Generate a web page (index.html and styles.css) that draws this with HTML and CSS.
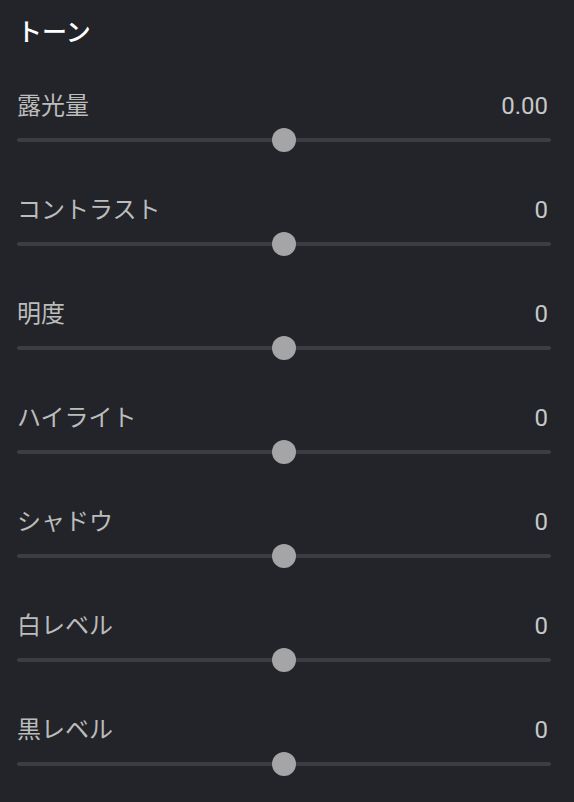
FILE: index.html
```html
<!DOCTYPE html>
<html lang="ja">
<head>
    <meta charset="utf-8" />
    <title>トーン</title>
    <link rel="stylesheet" href="styles.css">
</head>
<body>
    <div class="panel">
        <h2 class="panel-title">トーン</h2>

        <div class="adjust">
            <div class="adjust-head">
                <span class="adjust-label">露光量</span>
                <span class="adjust-value">0.00</span>
            </div>
            <input class="adjust-slider" type="range" min="-5" max="5" step="0.01" value="0" />
        </div>

        <div class="adjust">
            <div class="adjust-head">
                <span class="adjust-label">コントラスト</span>
                <span class="adjust-value">0</span>
            </div>
            <input class="adjust-slider" type="range" min="-100" max="100" value="0" />
        </div>

        <div class="adjust">
            <div class="adjust-head">
                <span class="adjust-label">明度</span>
                <span class="adjust-value">0</span>
            </div>
            <input class="adjust-slider" type="range" min="-100" max="100" value="0" />
        </div>

        <div class="adjust">
            <div class="adjust-head">
                <span class="adjust-label">ハイライト</span>
                <span class="adjust-value">0</span>
            </div>
            <input class="adjust-slider" type="range" min="-100" max="100" value="0" />
        </div>

        <div class="adjust">
            <div class="adjust-head">
                <span class="adjust-label">シャドウ</span>
                <span class="adjust-value">0</span>
            </div>
            <input class="adjust-slider" type="range" min="-100" max="100" value="0" />
        </div>

        <div class="adjust">
            <div class="adjust-head">
                <span class="adjust-label">白レベル</span>
                <span class="adjust-value">0</span>
            </div>
            <input class="adjust-slider" type="range" min="-100" max="100" value="0" />
        </div>

        <div class="adjust">
            <div class="adjust-head">
                <span class="adjust-label">黒レベル</span>
                <span class="adjust-value">0</span>
            </div>
            <input class="adjust-slider" type="range" min="-100" max="100" value="0" />
        </div>
    </div>
</body>
</html>
```

FILE: styles.css
```css
html, body {
    margin: 0;
    background-color: #222429;
}

body {
    font-family: "Noto Sans CJK JP", "Noto Sans", sans-serif;
    color: #bcbcbc;
}

.panel {
    padding: 14px 23px 0 17px;
}

.panel-title {
    margin: 0 0 42px 0;
    font-size: 25px;
    font-weight: 500;
    line-height: 32px;
    color: #ffffff;
}

.adjust {
    margin-bottom: 32px;
}

.adjust-head {
    display: flex;
    justify-content: space-between;
    align-items: center;
    height: 32px;
}

.adjust-label {
    font-size: 24px;
    line-height: 32px;
}

.adjust-value {
    margin-right: 3px;
    font-family: Roboto, "Noto Sans", sans-serif;
    font-size: 24px;
    line-height: 32px;
    color: #c8c8c8;
    transform: translateY(2px);
}

.adjust-slider {
    -webkit-appearance: none;
    appearance: none;
    display: block;
    width: 100%;
    height: 40px;
    margin: 0;
    background: transparent;
}

    .adjust-slider::-webkit-slider-runnable-track {
        height: 4px;
        border-radius: 2px;
        background-color: #3b3d42;
    }

    .adjust-slider::-webkit-slider-thumb {
        -webkit-appearance: none;
        width: 24px;
        height: 24px;
        margin-top: -10px;
        border: none;
        border-radius: 50%;
        background-color: #a5a5a7;
    }
```
